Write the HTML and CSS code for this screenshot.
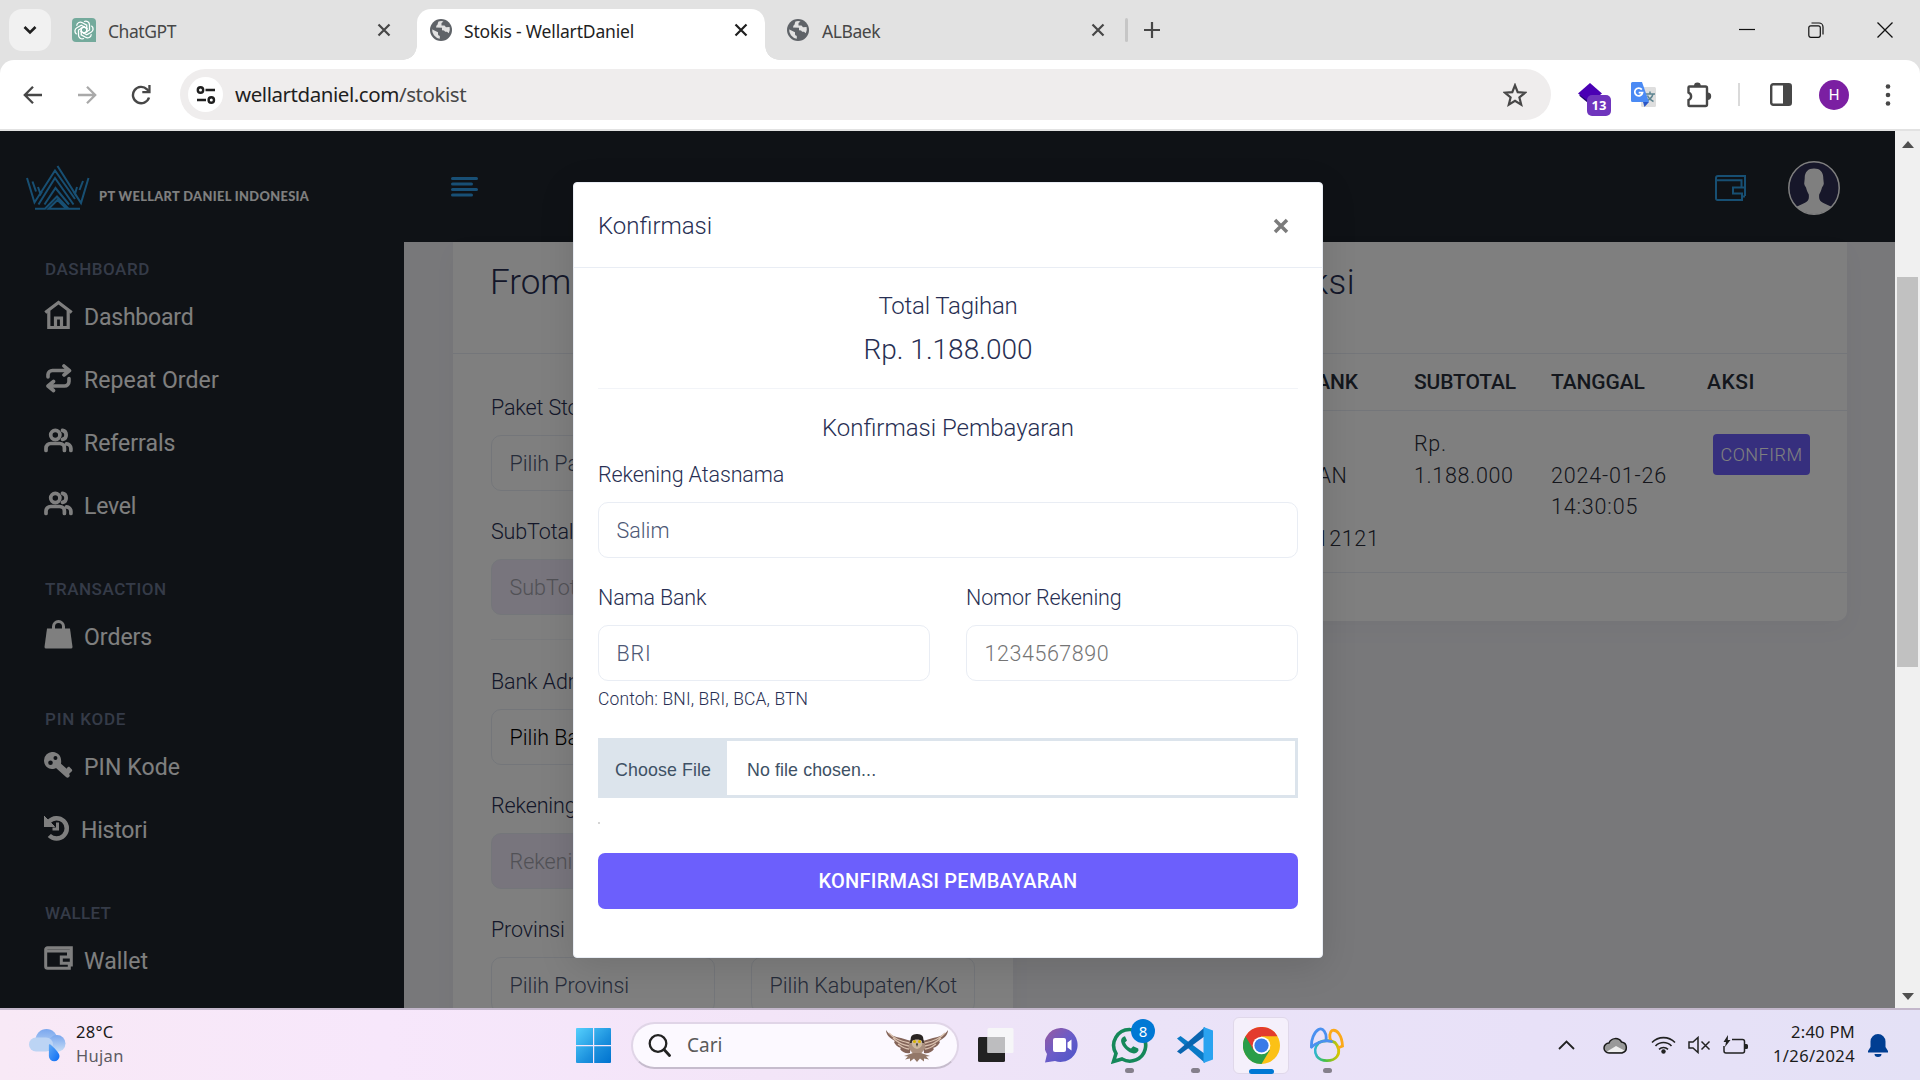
FILE: index.html
```html
<!DOCTYPE html>
<html lang="id">
<head>
<meta charset="utf-8">
<title>Stokis - WellartDaniel</title>
<link rel="stylesheet" href="styles.css">
</head>
<body>
<svg class="defs" width="0" height="0">
  <symbol id="i-x" viewBox="0 0 14 14"><path d="M1.500 1.500l11 11M12.500 1.500l-11 11" fill="none" stroke="currentColor" stroke-width="2.200"/></symbol>
  <symbol id="i-globe" viewBox="0 0 22 22"><circle cx="11" cy="11" r="11" fill="#5f6368"/><path d="M2.400 10.500L8 13.300V15c0 1 .8 1.800 1.800 1.800v3A9 9 0 0 1 2.200 9.800zM8.500 2.500C7.500 4 8 6 6.500 6.500L6 8.500l6 .3v2.400l2 .2 1.200 1.400H17l1.800 1.500A9 9 0 0 0 19.600 8L16 8.200 14.500 6.500H11.500V4l2-1.600a9 9 0 0 0-5 .1z" fill="#e2e2e2"/></symbol>
  <symbol id="i-users" viewBox="0 0 29 25"><g fill="none" stroke="currentColor" stroke-width="3.700" stroke-linecap="round"><circle cx="11.300" cy="7" r="4.600"/><path d="M2 22.500v-2.300a4.700 4.700 0 0 1 4.700-4.700h9a4.700 4.700 0 0 1 4.700 4.700v2.300M18.500 2.400a4.600 4.600 0 0 1 0 9M22.500 15.800a4.700 4.700 0 0 1 4.400 4.600v2.100"/></g></symbol>
</svg>

<header class="tabs">
  <button class="tab-search"><svg width="14" height="10" viewBox="0 0 14 10"><path d="M1.500 2l5.500 5.500L12.500 2" fill="none" stroke="#1f1f1f" stroke-width="2.600"/></svg></button>
  <div class="tab tab-first">
    <svg class="fav" width="24" height="24" viewBox="0 0 24 24"><path d="M4 0h16a4 4 0 0 1 4 4v20H4a4 4 0 0 1-4-4V4a4 4 0 0 1 4-4z" fill="#74aa9c"/><g fill="none" stroke="#fff" stroke-width="1.300"><path id="petal" d="M12 3.500c3-1.300 5.500.8 5.500 3.500v5L12 15.200 8.500 13"/><use href="#petal" transform="rotate(60 12 12)"/><use href="#petal" transform="rotate(120 12 12)"/><use href="#petal" transform="rotate(180 12 12)"/><use href="#petal" transform="rotate(240 12 12)"/><use href="#petal" transform="rotate(300 12 12)"/></g></svg>
    <span class="tab-name">ChatGPT</span><svg class="tx" width="14" height="14"><use href="#i-x"/></svg>
  </div>
  <div class="tab tab-active">
    <svg class="fav" width="22" height="22"><use href="#i-globe"/></svg>
    <span class="tab-name loose">Stokis - WellartDaniel</span><svg class="tx" width="14" height="14"><use href="#i-x"/></svg>
  </div>
  <div class="tab tab-last">
    <svg class="fav" width="22" height="22"><use href="#i-globe"/></svg>
    <span class="tab-name">ALBaek</span><svg class="tx" width="14" height="14"><use href="#i-x"/></svg>
  </div>
  <span class="tab-sep"></span>
  <svg class="plus" width="16" height="16" viewBox="0 0 16 16"><path d="M8 0v16M0 8h16" stroke="#474747" stroke-width="2.200"/></svg>
  <div class="win">
    <svg width="16" height="16" viewBox="0 0 16 16"><path d="M0 7.500h16" stroke="#111" stroke-width="1.200"/></svg>
    <svg width="16" height="16" viewBox="0 0 16 16"><g fill="none" stroke="#111" stroke-width="1.200"><rect x=".8" y="3.800" width="11.500" height="11.500" rx="2"/><path d="M3.500 1h7.500a4 4 0 0 1 4 4v7.500"/></g></svg>
    <svg width="16" height="16" viewBox="0 0 16 16"><path d="M.5.5l15 15M15.500.5l-15 15" stroke="#111" stroke-width="1.300"/></svg>
  </div>
</header>

<div class="toolbar-wrap"><div class="toolbar">
  <div class="nav">
    <svg width="20" height="20" viewBox="0 0 20 20"><path d="M19 10H2.500M10 1.800L1.800 10l8.200 8.200" fill="none" stroke="#474747" stroke-width="2.300"/></svg>
    <svg width="20" height="20" viewBox="0 0 20 20"><path d="M1 10h16.500M10 1.800l8.200 8.200-8.200 8.200" fill="none" stroke="#a9a9a9" stroke-width="2.300"/></svg>
    <svg width="20" height="20" viewBox="0 0 20 20"><path d="M18 12.500A8.200 8.200 0 1 1 16 4.300l2 2.200" fill="none" stroke="#474747" stroke-width="2.400"/><path d="M19.600 0v8.300h-8.300V6h6V0z" fill="#474747"/></svg>
  </div>
  <div class="omni">
    <span class="site"><svg width="20" height="18" viewBox="0 0 20 18"><g fill="none" stroke="#1f1f1f" stroke-width="2.400"><circle cx="4.500" cy="4" r="2.700"/><path d="M9.500 4H19M1 14h9"/><circle cx="15.300" cy="14" r="2.700"/></g></svg></span>
    <span class="url">wellartdaniel.com<i>/stokist</i></span>
    <svg class="star" width="24" height="24" viewBox="0 0 24 24"><path d="M12 2.300l2.700 6.900 7.400.5-5.700 4.700 1.800 7.200-6.200-3.900-6.200 3.900 1.800-7.200L1.900 9.700l7.400-.5z" fill="none" stroke="#474747" stroke-width="2.200"/></svg>
  </div>
  <div class="exts">
    <div class="ext-a"><svg width="26" height="26" viewBox="0 0 26 26"><path d="M2 13.500l12 10 6-5-6-9z" fill="#22066b"/><path d="M13 1l12 10.500-12 9L1 11.500z" fill="#4a00b4"/></svg><b>13</b></div>
    <svg class="ext-b" width="25" height="25" viewBox="0 0 25 25"><rect x="10" y="5" width="15" height="20" rx="1.500" fill="#dedede"/><path d="M14 12h10M19 9.500V12M22 12c-1 4-4 6-7 7.500M16.500 13.500c1 3 3 4.500 6 6" stroke="#5e8591" stroke-width="1.500" fill="none"/><path d="M12 20h6l-4.500 5z" fill="#2a56c6"/><path d="M1.500 0H11l7 20H1.500A1.500 1.500 0 0 1 0 18.500v-17A1.500 1.500 0 0 1 1.500 0z" fill="#4a8af4"/><path d="M10.800 7.600A3.900 3.900 0 1 0 11.500 10.700H7.700" fill="none" stroke="#fff" stroke-width="1.800"/></svg>
    <svg class="ext-c" width="26" height="26" viewBox="0 0 26 26"><path d="M2.500 5.500a1 1 0 0 1 1-1H19.500a1.500 1.500 0 0 1 1.500 1.500V22.500a1.500 1.500 0 0 1-1.500 1.500H3.500a1 1 0 0 1-1-1V18a4 4 0 0 0 0-7.500z" fill="none" stroke="#474747" stroke-width="2.400"/><path d="M8 4a3.400 3.400 0 0 1 6.800 0zM21.500 10.500a3.700 3.700 0 0 1 0 7.400z" fill="#474747"/></svg>
    <span class="vsep"></span>
    <svg class="ext-d" width="22" height="23" viewBox="0 0 22 23"><rect x="1.200" y="1.200" width="19.600" height="20.600" rx="2" fill="none" stroke="#474747" stroke-width="2.400"/><path d="M13 1h8v21h-8z" fill="#474747"/></svg>
    <span class="me">H</span>
    <svg class="dots" width="6" height="24" viewBox="0 0 6 24" fill="#474747"><circle cx="3" cy="3.500" r="2.300"/><circle cx="3" cy="12" r="2.300"/><circle cx="3" cy="20.500" r="2.300"/></svg>
  </div>
</div></div>

<main class="viewport">
  <div class="app">
    <aside class="side">
      <div class="brand">
        <svg width="64" height="46" viewBox="26 164 64 46"><g fill="none" stroke="#2f9fe6" stroke-width="2"><path d="M27 178l7.500 24.500 20.500-32 20 28.500M88.500 178L81 203 57.500 166M32.500 181.500l3.500 10M83 181l-3.500 9M38 187l2.500 7 1.500-2.500M77 187l-2 7-1.500-2.500M38.500 204.500L55 178l18.500 26.500M44.500 204.500L55.500 188 69 204.500M35 208.800h10L57 196.500l11.500 12.300h11.500M48.500 208.800h18L57.500 200z"/></g></svg>
        <span>PT WELLART DANIEL INDONESIA</span>
      </div>
      <section><h6>DASHBOARD</h6>
        <a><svg width="29" height="30" viewBox="0 0 29 30"><g fill="none" stroke="currentColor" stroke-width="3.200"><path d="M1.300 12.500L14.500 2.500l13.200 10"/><path d="M4.800 10.500v17h19.400v-17M11.500 27.500v-9.500h6v9.500"/></g></svg><span class="tight">Dashboard</span></a>
        <a><svg width="29" height="30" viewBox="0 0 29 30"><g fill="none" stroke="currentColor" stroke-width="3.600" stroke-linecap="round" stroke-linejoin="round"><path d="M4 14v-2.500A4.500 4.500 0 0 1 8.500 7.500H25M20 3l5.500 4.700L20 12M25 15.500v3A4.500 4.500 0 0 1 20.500 23H4.500M9.500 18.500L4 23l5.500 4.500"/></g></svg><span class="wide">Repeat Order</span></a>
        <a><svg width="29" height="25"><use href="#i-users"/></svg><span>Referrals</span></a>
        <a><svg width="29" height="25"><use href="#i-users"/></svg><span class="tight">Level</span></a>
      </section>
      <section><h6>TRANSACTION</h6>
        <a><svg width="29" height="29" viewBox="0 0 29 29"><path d="M3 8.500h23l2.500 18.500a1.500 1.500 0 0 1-1.500 1.500H2A1.500 1.500 0 0 1 .5 27z" fill="currentColor"/><path d="M9.500 9V6.500a5 5 0 0 1 10 0V9" fill="none" stroke="currentColor" stroke-width="3"/></svg><span>Orders</span></a>
      </section>
      <section><h6 class="pin">PIN KODE</h6>
        <a><svg width="29" height="26" viewBox="0 0 29 26"><path fill-rule="evenodd" fill="currentColor" d="M9 0a8.500 8.500 0 0 0-9 8.500C0 13 3.500 17 8 17c1.500 0 3-.4 4-1l10 9c1 1 2 1 3 0s1-2 0-3l2-2 .9-.8c.5-.7.300-1.300-.2-1.900L25 14.500l-1.700 1-.6 1.200-5.700-5C18 5 15 .5 9 0zM11.500 4a2 2 0 1 1-.1 4 2 2 0 0 1 .1-4zM6.500 8.500a2.300 2.300 0 1 1 0 4.600 2.300 2.300 0 0 1 0-4.600z"/></svg><span class="wide">PIN Kode</span></a>
        <a><svg width="26" height="26" viewBox="0 0 26 26"><path d="M5 6.500A10.200 10.200 0 1 1 5.300 20.500" fill="none" stroke="currentColor" stroke-width="4.500"/><path d="M0 1v10.500h10.500z" fill="currentColor" stroke="currentColor"/><path d="M13.500 7.500v6.500H8.500" fill="none" stroke="currentColor" stroke-width="3"/></svg><span class="tight">Histori</span></a>
      </section>
      <section><h6 class="wal">WALLET</h6>
        <a><svg width="29" height="24" viewBox="0 0 29 24"><g fill="none" stroke="currentColor" stroke-width="3"><path d="M27.300 20.500V1.700H3.500A1.800 1.800 0 0 0 1.700 3.500v17a1.800 1.800 0 0 0 1.800 1.800h21.800v-5h-8V11h9.500M2 5h22.500v6"/></g></svg><span class="wide">Wallet</span></a>
      </section>
    </aside>
    <div class="main">
      <div class="topbar">
        <svg width="28" height="20" viewBox="0 0 28 20"><path d="M1.500 1.500h24M1.500 7h19M1.500 12.500h24M1.500 18h19" stroke="#309eea" stroke-width="3" stroke-linecap="round"/></svg>
        <svg class="tb-wallet" width="31" height="26" viewBox="0 0 31 26"><g fill="none" stroke="#2f9fe6" stroke-width="2"><path d="M30 21V1H3a2 2 0 0 0-2 2v20.500A1.500 1.500 0 0 0 2.500 25H27v-6.500h-9V12.500h12M1 5.300h25.500v7M27 21.500h3"/></g></svg>
        <svg class="tb-user" width="52" height="54" viewBox="0 0 52 54"><clipPath id="face"><ellipse cx="26" cy="27" rx="25" ry="26"/></clipPath><ellipse cx="26" cy="27" rx="25.200" ry="26.200" fill="#2e2e54" stroke="#fff" stroke-width="1.500"/><path clip-path="url(#face)" d="M26 7.500c-6 0-9.500 3.500-9.300 10l-.5 5c.3 2.500 1.300 3 1.800 4 .8 3.500 2 5.500 2.800 7 .5 7-.8 7.500-11.800 12L8 54h36l-1-8.500c-11-4.500-12.300-5-11.800-12 .8-1.500 2-3.500 2.800-7 .5-1 1.500-1.500 1.800-4l-.5-5C35.500 11 32 7.500 26 7.500z" fill="#fff"/></svg>
      </div>
      <div class="content">
        <div class="card card-form">
          <div class="card-head">From Stokis</div>
          <div class="card-body">
            <div class="group"><label>Paket Stokis</label><div class="input dk">Pilih Paket</div></div>
            <div class="group"><label>SubTotal</label><div class="input off">SubTotal</div></div>
            <div class="line"></div>
            <div class="group"><label>Bank Admin</label><div class="input blk">Pilih Bank</div></div>
            <div class="group"><label>Rekening</label><div class="input off">Rekening</div></div>
            <div class="two">
              <div class="group"><label>Provinsi</label><div class="input dk">Pilih Provinsi</div></div>
              <div class="group"><label>&nbsp;</label><div class="input dk">Pilih Kabupaten/Kot</div></div>
            </div>
          </div>
        </div>
        <div class="card card-table">
          <div class="card-head histori">Histori Transaksi</div>
          <div class="tr th"><span class="c-bank">BANK</span><span>SUBTOTAL</span><span>TANGGAL</span><span class="aksi">AKSI</span></div>
          <div class="tr td">
            <div class="c-bank"><br>SAN<br><br>212121</div>
            <div>Rp.<br>1.188.000</div>
            <div class="c-date">2024-01-26<br>14:30:05</div>
            <div class="c-act"><button>CONFIRM</button></div>
          </div>
        </div>
      </div>
    </div>
    <div class="backdrop"></div>
    <div class="modal">
      <div class="m-head"><span>Konfirmasi</span><svg width="16" height="16" viewBox="0 0 16 16"><path d="M2 2l12 12M14 2L2 14" stroke="#7b7b7b" stroke-width="3.500"/></svg></div>
      <div class="m-body">
        <div class="t1 tight">Total Tagihan</div>
        <div class="t2">Rp. 1.188.000</div>
        <hr>
        <div class="t1">Konfirmasi Pembayaran</div>
        <div class="group g1"><label>Rekening Atasnama</label><div class="input dk">Salim</div></div>
        <div class="pair">
          <div><label>Nama Bank</label><div class="input dk bri">BRI</div><small>Contoh: BNI, BRI, BCA, BTN</small></div>
          <div><label>Nomor Rekening</label><div class="input num">1234567890</div></div>
        </div>
        <div class="file"><b>Choose File</b><span>No file chosen...</span></div>
        <i class="speck"></i>
        <button class="submit">KONFIRMASI PEMBAYARAN</button>
      </div>
    </div>
  </div>
  <div class="scroll">
    <svg width="12" height="7" viewBox="0 0 12 7"><path d="M6 0l6 7H0z" fill="#505050"/></svg>
    <div class="thumb"></div>
    <svg class="dn" width="12" height="7" viewBox="0 0 12 7"><path d="M6 7L0 0h12z" fill="#505050"/></svg>
  </div>
</main>

<footer class="taskbar">
  <div class="weather">
    <svg width="37" height="34" viewBox="0 0 37 34"><defs><linearGradient id="cloud" x1="0" y1="0" x2="0" y2="1"><stop offset="0" stop-color="#7aa7ee"/><stop offset="1" stop-color="#c9def6"/></linearGradient><linearGradient id="drop" x1="0" y1="0" x2="1" y2="1"><stop offset="0" stop-color="#5fa8f5"/><stop offset="1" stop-color="#0a6cf5"/></linearGradient></defs><circle cx="17.500" cy="12" r="11" fill="url(#cloud)"/><circle cx="28" cy="15.500" r="8.500" fill="url(#cloud)"/><rect x="0" y="9.500" width="24" height="14" rx="7" fill="#bcd4f4"/><path d="M22 23.500h6" stroke="#c9def6" stroke-width="2"/><path d="M20.500 16c.5 0 10 8 10 12a5.300 5.300 0 0 1-10.600 0V17z" fill="url(#drop)"/></svg>
    <div><span class="temp">28°C</span><span class="cond">Hujan</span></div>
  </div>
  <svg class="start" width="35" height="35" viewBox="0 0 35 35"><defs><linearGradient id="win" x1="0" y1="0" x2="1" y2="1"><stop offset="0" stop-color="#55d0fd"/><stop offset=".6" stop-color="#1b90dd"/><stop offset="1" stop-color="#0072cf"/></linearGradient></defs><path d="M1 0h16v17H0V1a1 1 0 0 1 1-1zM18.200 0H34a1 1 0 0 1 1 1v16H18.200zM0 18.200h17V35H1a1 1 0 0 1-1-1zM18.200 18.200H35V34a1 1 0 0 1-1 1H18.200z" fill="url(#win)"/></svg>
  <div class="search">
    <svg width="23" height="23" viewBox="0 0 23 23"><circle cx="10" cy="9.500" r="8.300" fill="none" stroke="#222" stroke-width="2.300"/><path d="M16 15.500l5.500 6" stroke="#222" stroke-width="2.800" stroke-linecap="round"/></svg>
    <span>Cari</span>
    <svg class="owl" width="64" height="33" viewBox="0 0 64 33"><path d="M1 1c3 5 9 7 15 8l10 3-1 12c-4 1-8-1-10-4l1-1c-4-1-6-4-7-6l1-1C4 9 1 5 1 1z" fill="#846459"/><path d="M63 1c-3 5-9 7-15 8l-10 3 1 12c4 1 8-1 10-4l-1-1c4-1 6-4 7-6l-1-1c6-3 9-7 9-11z" fill="#846459"/><path d="M4 4c5 6 12 8 20 10M8 9c5 5 10 7 16 8M13 15c4 3 7 5 11 5M60 4c-5 6-12 8-20 10M56 9c-5 5-10 7-16 8M51 15c-4 3-7 5-11 5" stroke="#d9c0ae" stroke-width="1.300" fill="none"/><path d="M25 11h14l1.500 8-5.500 7h-6l-5.500-7z" fill="#a98f7e"/><path d="M26 8c1-4 11-4 12 0l1 6H25z" fill="#2a2423"/><path d="M27 12c2-2 8-2 10 0 1 4-1 7-5 8-4-1-6-4-5-8z" fill="#cdb89f"/><circle cx="29.500" cy="12.500" r="1.500" fill="#d8b400"/><circle cx="34.500" cy="12.500" r="1.500" fill="#d8b400"/><path d="M31 14.500h2l-1 3.500z" fill="#222"/><path d="M28 24l-9 3 4 .5-3 3 5-1 0 3 4-3 3 3.500 3-3.500 4 3 0-3 5 1-3-3 4-.5-9-3z" fill="#937868"/></svg>
  </div>
  <svg class="tv" width="36" height="35" viewBox="0 0 36 35"><rect y="9" width="27" height="25" rx="1.500" fill="#222"/><rect x="9.500" y="0" width="26" height="25" rx="1.500" fill="#f6f6f8"/><path d="M9.500 9H27v16H9.500z" fill="#bdbdbf"/></svg>
  <svg class="chat" width="34" height="35" viewBox="0 0 34 35"><defs><linearGradient id="bubble" x1="0" y1="0" x2="1" y2="1"><stop offset="0" stop-color="#9a5a9e"/><stop offset=".5" stop-color="#6a5cc8"/><stop offset="1" stop-color="#4b55c9"/></linearGradient></defs><path d="M17 0a17 17 0 1 1-7 33l-10 1.500 2-8.500A17 17 0 0 1 17 0z" fill="url(#bubble)"/><rect x="8" y="10" width="13" height="14" rx="2" fill="#fff"/><path d="M22.500 14.500l4-3v11l-4-3z" fill="#fff"/></svg>
  <div class="wa"><svg width="38" height="37" viewBox="0 0 38 37"><path d="M19 2.500a15.800 15.800 0 1 1-8 29.500L2.500 34.500 5 26.500A15.800 15.800 0 0 1 19 2.500z" fill="none" stroke="#15885a" stroke-width="3.600"/><path d="M13 9.500c-5 2-3 8 1.500 12.500s10.500 6.500 13 1.500l-.3-2-5-2.300-2.200 2.300c-3-1.300-4.700-3-6-6l2-2-2-4.200z" fill="#15885a"/></svg><b>8</b></div>
  <svg class="vs" width="36" height="36" viewBox="0 0 36 36"><path d="M0 11.500L3.500 9 28 27v9z" fill="#0a7ac6"/><path d="M0 24.500L3.500 27 28 9V0z" fill="#0a65b0"/><path d="M26.500 0L36 3.500v29L26.500 36z" fill="#2aa3f0"/></svg>
  <div class="ch"><svg width="37" height="37" viewBox="0 0 36 36"><circle cx="18" cy="18" r="18" fill="#fbc116"/><path d="M18 18L2.400 9A18 18 0 0 0 18 36l8-13.500z" fill="#2a9d49"/><path d="M2.400 9a18 18 0 0 1 31.200 0H18l-7.500 13.500z" fill="#e33b2e"/><circle cx="18" cy="18" r="8.600" fill="#fff"/><circle cx="18" cy="18" r="6.900" fill="#3a7be8"/></svg></div>
  <svg class="cat" width="36" height="36" viewBox="0 0 36 36"><defs><linearGradient id="ring" x1="0" y1="0" x2="1" y2="0"><stop offset="0" stop-color="#2fb5d0"/><stop offset=".4" stop-color="#41c04a"/><stop offset="1" stop-color="#d8c400"/></linearGradient></defs><g fill="none" stroke-width="2.800" stroke-linecap="round"><path d="M10 15.500c5-2.500 12-2.500 16 0 4 4 5 10 2 14-4 5.500-16 5.500-20 0-3-4.500-2-10 2-14z" stroke="url(#ring)"/><path d="M2.500 20C2 13 5 5 9.500 2.500S18 6 17 13" stroke="#4a90f0"/><path d="M22 14c-2-4-1.500-9 1-10.500 5-1.500 10 5 10.500 15.500l-3.500 1.500" stroke="#fba919"/><path d="M2.500 20c2-2 4.500-3.500 7.500-4.500 3.500-1.500 9-1.800 12.500-1" stroke="#4a90f0"/></g></svg>
  <div class="tray">
    <svg width="17" height="10" viewBox="0 0 17 10"><path d="M1 9l7.500-7.500L16 9" fill="none" stroke="#222" stroke-width="1.800"/></svg>
    <svg class="cl" width="25" height="17" viewBox="0 0 25 17"><path d="M6 16a5 5 0 0 1 0-10 7 7 0 0 1 12.500-1A5.600 5.600 0 0 1 19 16z" fill="#999" stroke="#1a1a1a" stroke-width="1.500"/><path d="M4 14.500l9-5.500 8.500 4.500-3 1.600H6z" fill="#eee"/></svg>
    <svg class="wf" width="25" height="18" viewBox="0 0 25 18"><g fill="none" stroke="#222" stroke-width="1.600"><path d="M1 6.500a16 16 0 0 1 23 0M4.500 10a11 11 0 0 1 16 0M8 13.300a6.500 6.500 0 0 1 9 0"/></g><circle cx="12.500" cy="15.500" r="2.200" fill="#222"/></svg>
    <svg class="vo" width="23" height="18" viewBox="0 0 23 18"><path d="M1 6v6h4l5 4.500v-15L5 6zM13.500 5.500l8 8M21.500 5.500l-8 8" fill="none" stroke="#222" stroke-width="1.500"/></svg>
    <svg class="ba" width="25" height="20" viewBox="0 0 25 20"><path d="M9 4.500h10.500a2 2 0 0 1 2 2V16a2 2 0 0 1-2 2H3a2 2 0 0 1-2-2v-5" fill="none" stroke="#222" stroke-width="1.500"/><path d="M5 0L.5 7H3l-1 5 5.500-7H4.800zM22 9h1.500a1.500 1.500 0 0 1 1.500 1.500v2a1.500 1.500 0 0 1-1.500 1.500H22z" fill="#222"/></svg>
    <div class="clock"><span>2:40 PM</span><span>1/26/2024</span></div>
    <svg class="bell" width="20" height="23" viewBox="0 0 20 23"><path d="M10 0a7.500 7.500 0 0 1 7.500 7.500V13l2.500 4v1.500H0V17l2.500-4V7.500A7.500 7.500 0 0 1 10 0zM6.500 20h7a3.500 3 0 0 1-7 0z" fill="#003e92"/></svg>
  </div>
</footer>
</body>
</html>
```
FILE: styles.css
```css
* { box-sizing: border-box; }
body { margin: 0; width: 1920px; height: 1080px; overflow: hidden; display: flex; flex-direction: column; font-family: Roboto, "Noto Sans", sans-serif; background: #fff; }
svg { display: block; flex: none; }
button { border: 0; padding: 0; font: inherit; letter-spacing: inherit; }
.defs { position: absolute; }

/* tab strip */
.tabs { height: 60px; flex: none; background: #e2e2e2; display: flex; align-items: center; font: 17.500px/24px "Noto Sans", sans-serif; letter-spacing: -.45px; color: #474747; padding-left: 9px; white-space: nowrap; }
.tab-search { width: 42px; height: 42px; border-radius: 13px; background: #f1f1f1; display: flex; align-items: center; justify-content: center; }
.tab { display: flex; align-items: center; height: 51px; margin-top: 9px; padding-bottom: 9px; }
.tab-name { flex: 1; margin-left: 12px; padding-top: 2px; }
.tab-name.loose { letter-spacing: -.18px; }
.tab-first { width: 340px; padding-left: 21px; }
.tab-active { margin-left: 26px; width: 348px; padding: 0 17px 9px 13px; background: #fff; border-radius: 14px 14px 0 0; color: #1f1f1f; position: relative; }
.tab-active::before, .tab-active::after { content: ""; position: absolute; bottom: 0; width: 14px; height: 14px; }
.tab-active::before { left: -14px; background: radial-gradient(circle at 0 0, transparent 13.500px, #fff 14px); }
.tab-active::after { right: -14px; background: radial-gradient(circle at 100% 0, transparent 13.500px, #fff 14px); }
.tab-last { width: 340px; padding-left: 22px; }
.tab-last .tab-name { margin-left: 13px; }
.tab-sep { width: 3px; height: 24px; border-radius: 2px; background: #c6c6c6; margin-left: 20px; }
.plus { margin-left: 16px; }
.win { margin-left: auto; display: flex; gap: 53px; margin-right: 27px; }

/* toolbar */
.toolbar-wrap { height: 71px; flex: none; background: #e2e2e2; padding-bottom: 2px; }
.toolbar { height: 69px; background: #fff; border-radius: 14px 14px 0 0; display: flex; align-items: center; padding-left: 23px; }
.nav { display: flex; gap: 34px; width: 157px; }
.omni { width: 1371px; height: 51px; border-radius: 26px; background: #efeded; display: flex; align-items: center; padding: 0 24px 0 8px; }
.site { width: 35px; height: 35px; border-radius: 50%; background: #fff; display: flex; align-items: center; justify-content: center; }
.url { font: 20.500px/30px "Noto Sans", sans-serif; letter-spacing: -.44px; color: #1f1f1f; margin: 0 0 2px 12px; white-space: nowrap; }
.url i { font-style: normal; color: #474747; }
.star { margin-left: auto; }
.exts { display: flex; align-items: center; flex: 1; padding-left: 26px; }
.ext-a { position: relative; width: 32px; height: 26px; }
.ext-a b { position: absolute; left: 10px; top: 13px; width: 24px; height: 21px; border-radius: 5px; background: #6f35bd; color: #fff; font: bold 13px/21px "Noto Sans", sans-serif; text-align: center; }
.ext-b { margin-left: 22px; }
.ext-c { margin-left: 30px; }
.vsep { width: 2px; height: 23px; background: #dadada; margin-left: 26px; }
.ext-d { margin-left: 30px; }
.me { width: 30px; height: 30px; border-radius: 50%; background: #7b1fa2; color: #fff; font-size: 15px; line-height: 30px; text-align: center; margin-left: 27px; }
.dots { margin-left: 36px; }

/* page */
.viewport { height: 877px; flex: none; display: flex; }
.app { width: 1895px; position: relative; display: flex; overflow: hidden; background: #f0f0f5; }
.tight { letter-spacing: -.2px; }
.wide { letter-spacing: .1px; }
.side { width: 404px; background: #1e242c; flex: none; display: flex; flex-direction: column; gap: 41.500px; color: #fff; }
.brand { height: 86.500px; display: flex; padding: 33px 0 0 26px; }
.brand span { font: 900 12.800px/16px Lato, sans-serif; letter-spacing: .38px; margin: 24px 0 0 9px; white-space: nowrap; }
.side h6 { margin: 0 0 6px 45px; font-size: 17px; line-height: 20px; font-weight: 500; letter-spacing: .55px; color: #6a7690; }
.side h6.pin { letter-spacing: .8px; }
.side h6.wal { letter-spacing: .3px; }
.side a { height: 63px; display: flex; align-items: center; padding-left: 44px; gap: 11px; font-size: 23px; white-space: nowrap; }
.side a svg { margin-top: -4px; }
.side a span { padding-top: 2px; }
.main { flex: 1; min-width: 0; }
.topbar { height: 111px; background: #1e242c; display: flex; align-items: flex-start; padding: 46px 55px 0 47px; }
.tb-wallet { margin: -2px 42px 0 auto; }
.tb-user { margin-top: -16px; }
.content { display: flex; align-items: flex-start; gap: 40px; padding-left: 49px; }
.card { background: #fff; border-radius: 0 0 10px 10px; box-shadow: 0 8px 24px rgba(40, 40, 60, .03); flex: none; }
.card-form { width: 560px; height: 800px; }
.card-table { width: 794px; height: 379px; }
.card-head { height: 112px; padding: 21px 37px 0; border-bottom: 1px solid #e9edf4; font-size: 35px; line-height: 40px; font-weight: 350; color: #282f53; white-space: nowrap; }
.histori { padding-left: 39px; letter-spacing: .38px; }
.card-body { padding: 37px 38px 0; }
.group { margin-bottom: 24px; }
label { display: block; font-size: 21.500px; line-height: 33px; letter-spacing: -.14px; margin-bottom: 11px; color: #282f53; font-weight: 350; white-space: nowrap; }
.input { height: 56px; border: 1px solid #e9edf4; border-radius: 10px; padding: 0 17.500px; font-size: 21.500px; line-height: 55px; font-weight: 350; white-space: nowrap; }
.dk { color: #4d5875; }
.blk { color: #000; }
.off { background: #f0eafa; color: #a3a3ad; }
.num { color: #757575; letter-spacing: .55px; }
.bri { letter-spacing: .8px; }
.line { height: 1px; background: #f3f4f8; margin-bottom: 25px; }
.two { display: flex; gap: 36px; }
.two .group { width: 224px; }
.tr { display: grid; grid-template-columns: 361px 137px 156px 140px; color: #2a2d38; }
.th { height: 57px; border-bottom: 1px solid #e9edf4; font-size: 21px; font-weight: 500; line-height: 57px; letter-spacing: -.12px; color: #282f3b; }
.th .aksi { letter-spacing: .5px; }
.th .c-bank { padding-left: 250px; }
.td { height: 162px; border-bottom: 1px solid #e9edf4; font-size: 21.500px; line-height: 31.500px; letter-spacing: .65px; font-weight: 350; padding-top: 17px; }
.c-bank { padding-left: 251px; }
.c-date { padding-top: 31.500px; letter-spacing: .82px; }
.c-act button { margin: 6px 0 0 6px; width: 97px; height: 41px; border-radius: 4px; background: #6c5ffc; color: #fff; font-size: 18px; letter-spacing: .48px; text-align: center; line-height: 41px; }

/* dialog */
.backdrop { position: absolute; inset: 0; background: rgba(0, 0, 0, .5); }
.modal { position: absolute; left: 573px; top: 51px; width: 750px; height: 776px; background: #fff; border: 1px solid #e9edf4; border-radius: 4px; box-shadow: 0 8px 36px rgba(0, 0, 0, .12); color: #282f53; font-weight: 350; }
.m-head { height: 85px; border-bottom: 1px solid #e9edf4; display: flex; align-items: center; justify-content: space-between; padding: 1px 33px 0 24px; font-size: 24px; }
.m-body { padding: 24px 24px 0; }
.t1 { text-align: center; font-size: 24px; line-height: 28px; }
.t2 { text-align: center; font-size: 28px; line-height: 34px; margin-top: 13px; }
hr { border: 0; height: 1px; background: #f2f4f8; margin: 21px 0 25px; }
.modal .g1 { margin: 16px 0 23px; }
.pair { display: grid; grid-template-columns: 1fr 1fr; gap: 36px; }
.pair > div { height: 130px; }
small { font-size: 17.500px; line-height: 24px; letter-spacing: .11px; display: block; margin-top: 6px; white-space: nowrap; }
.file { height: 60px; border: 3px solid #dce4ec; margin-top: 27px; display: flex; align-items: stretch; font: 17.800px/59px "Liberation Sans", Arial, sans-serif; letter-spacing: .1px; color: #3e5165; }
.file b { font-weight: 400; width: 126px; height: 54px; background: #dce4ec; padding-left: 14px; margin-right: 20px; }
.file span { height: 54px; }
.speck { display: block; width: 2px; height: 2px; background: #d5d5d5; margin: 24px 0 29px; }
.submit { display: block; width: 100%; height: 56px; border-radius: 7px; background: #6c5ffc; color: #fff; font-size: 20px; font-weight: 500; letter-spacing: .24px; text-align: center; }

.scroll { width: 25px; background: #f0f0f0; display: flex; flex-direction: column; align-items: center; padding: 10px 0 8px; }
.thumb { width: 21px; height: 390px; background: #c1c1c1; margin-top: 129px; }
.dn { margin-top: auto; }

/* taskbar */
.taskbar { height: 72px; flex: none; border-top: 2px solid #c3b7cb; background: linear-gradient(90deg, #f8e9f6, #f7e7fb 20%, #f3e5f8 40%, #ebe3f8 60%, #e8e1f8 80%, #e4e1f6); display: flex; align-items: center; font-family: "Noto Sans", sans-serif; }
.weather { display: flex; align-items: center; width: 576px; padding-left: 29px; gap: 10px; }
.weather span, .clock span { display: block; font-size: 16.500px; line-height: 24px; letter-spacing: .3px; white-space: nowrap; margin-bottom: 0; }
.weather div, .clock { padding-bottom: 3px; }
.temp { color: #1b1b1b; }
.cond { color: #5d5a62; }
.search { width: 328px; height: 47px; margin-left: 20px; border-radius: 24px; background: #fcf9ff; border: 2px solid #e0d5e7; border-bottom-color: #c6bccd; display: flex; align-items: center; padding: 0 8px 0 15px; font-size: 19px; color: #5a5a5a; }
.search span { margin: 0 0 1px 16px; }
.owl { margin-left: auto; }
.tv { margin-left: 19px; }
.chat { margin-left: 31px; }
.wa { margin-left: 32px; position: relative; }
.wa b { position: absolute; left: 20px; top: -8px; width: 24px; height: 24px; border-radius: 50%; background: #0078d4; color: #fff; font: 15px/24px "Noto Sans", sans-serif; text-align: center; }
.wa::after, .ch::after { content: ""; position: absolute; left: 14px; top: 41px; width: 9px; height: 5px; border-radius: 3px; background: #85808c; box-shadow: 66px 0 #85808c, 198px 0 #85808c; }
.vs { margin-left: 28px; }
.ch { margin-left: 20px; width: 56px; height: 57px; border-radius: 6px; background: #f5f0fb; border: 1px solid #e0d8ea; display: flex; align-items: center; justify-content: center; position: relative; }
.ch::after { left: 15px; top: 51px; width: 25px; background: #0078d4; box-shadow: none; }
.cat { margin-left: 20px; }
.tray { margin-left: auto; display: flex; align-items: center; padding-right: 32px; }
.cl { margin-left: 28px; }
.wf { margin-left: 23px; }
.vo { margin-left: 12px; }
.ba { margin-left: 12px; }
.clock { width: 107px; text-align: right; color: #1b1b1b; }
.bell { margin-left: 13px; }
.clock span + span { letter-spacing: .42px; }
```
